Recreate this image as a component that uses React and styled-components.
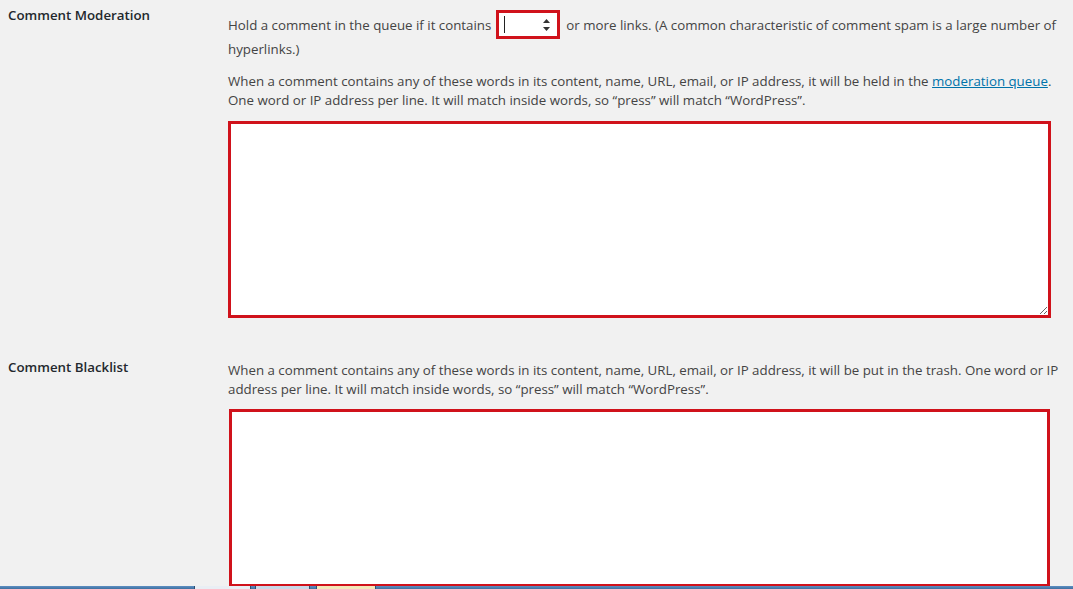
import React from 'react'
import styled, { createGlobalStyle } from 'styled-components'

const Global = createGlobalStyle`
  html, body {
    margin: 0;
    padding: 0;
    background: #f1f1f1;
    overflow: hidden;
  }
  * { box-sizing: border-box; }
`;

const Page = styled.div`
  height: 589px;
  display: flex;
  flex-direction: column;
  font-family: 'Open Sans', 'Noto Sans', sans-serif;
  color: #444;
`;

const Content = styled.div`
  flex: 1;
  overflow: hidden;
  display: flex;
  flex-direction: column;
`;

const Row = styled.div`
  display: flex;
`;

const Label = styled.div`
  width: 228px;
  flex-shrink: 0;
  padding-left: 8px;
  padding-top: ${p => p.top}px;
  font-size: 13.3px;
  line-height: 20px;
  font-weight: 600;
  color: #23282d;
`;

const Field = styled.div`
  flex: 1;
  padding-top: ${p => p.top}px;
  font-size: 13.3px;
`;

const InlineLine = styled.div`
  display: flex;
  align-items: center;
  height: 29px;
  white-space: nowrap;
`;

const Text = styled.span`
  line-height: 20px;
`;

const NumberBox = styled.div`
  width: 64px;
  height: 29px;
  margin: 0 6px 0 5px;
  border: 3px solid #d0121b;
  background: #fff;
  display: flex;
  align-items: center;
  justify-content: space-between;
  padding: 0 6px 0 5px;
`;

const Caret = styled.span`
  width: 1px;
  height: 17px;
  background: #222;
`;

const Spinner = styled.svg`
  width: 9px;
  height: 14px;
`;

const Line = styled.div`
  line-height: 20px;
  white-space: nowrap;
`;

const Para = styled.p`
  margin: ${p => p.top}px 0 0;
  line-height: 19px;
  white-space: nowrap;
`;

const Link = styled.a`
  color: #0073aa;
  text-decoration: underline;
`;

const Area = styled.textarea`
  display: block;
  margin: ${p => p.top}px 0 0 ${p => p.inset}px;
  width: ${p => p.w}px;
  height: ${p => p.h}px;
  border: 3px solid #d0121b;
  background: #fff;
  outline: none;
  font-family: inherit;
  resize: ${p => (p.$fixed ? 'none' : 'both')};
`;

const Taskbar = styled.div`
  height: 3px;
  flex-shrink: 0;
  display: flex;
  background: linear-gradient(#5d8fc2, #3f6f9f);
`;

const TaskTab = styled.div`
  width: ${p => p.w}px;
  margin-left: ${p => p.gap}px;
  background: ${p => p.color};
  border-left: 1px solid #2d4f72;
  border-right: 1px solid #2d4f72;
`;

export default function App() {
  return (
    <>
      <Global />
      <Page>
        <Content>
          <Row>
            <Label top={5}>Comment Moderation</Label>
            <Field top={10}>
              <InlineLine>
                <Text>Hold a comment in the queue if it contains</Text>
                <NumberBox>
                  <Caret />
                  <Spinner viewBox="0 0 9 14">
                    <path d="M4.5 1 L8 5 H1 Z" fill="#333" />
                    <path d="M4.5 13 L8 9 H1 Z" fill="#333" />
                  </Spinner>
                </NumberBox>
                <Text>or more links. (A common characteristic of comment spam is a large number of</Text>
              </InlineLine>
              <Line>hyperlinks.)</Line>
              <Para top={13}>
                When a comment contains any of these words in its content, name, URL, email, or IP address, it will be held in the <Link href="#">moderation queue</Link>.
                <br />
                One word or IP address per line. It will match inside words, so “press” will match “WordPress”.
              </Para>
              <Area top={11} inset={0} w={823} h={197} />
            </Field>
          </Row>
          <Row>
            <Label top={39}>Comment Blacklist</Label>
            <Field top={43}>
              <Para top={0}>
                When a comment contains any of these words in its content, name, URL, email, or IP address, it will be put in the trash. One word or IP
                <br />
                address per line. It will match inside words, so “press” will match “WordPress”.
              </Para>
              <Area top={10} inset={1} w={821} h={178} $fixed />
            </Field>
          </Row>
        </Content>
        <Taskbar>
          <TaskTab gap={194} w={57} color="#e9eef4" />
          <TaskTab gap={4} w={55} color="#c9d8e8" />
          <TaskTab gap={6} w={60} color="#f3e7b9" />
        </Taskbar>
      </Page>
    </>
  )
}
